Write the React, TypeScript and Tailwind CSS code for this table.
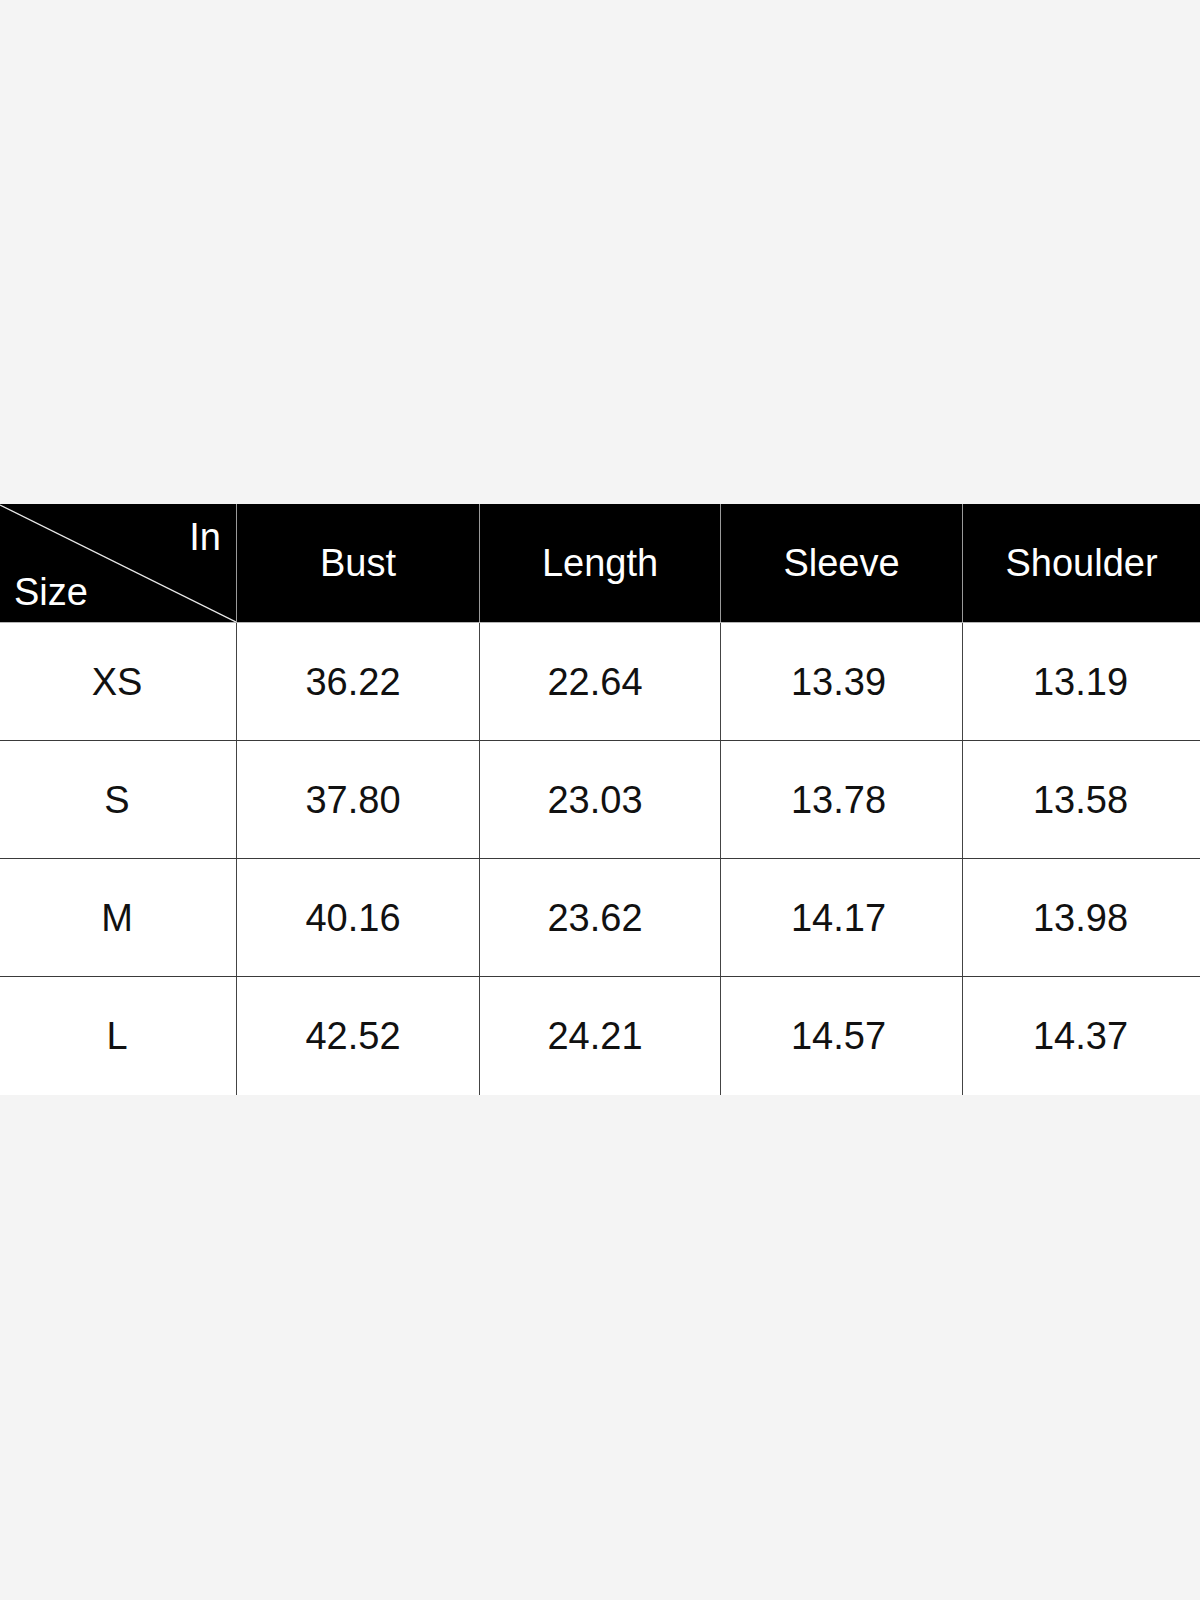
const columns = ["Bust", "Length", "Sleeve", "Shoulder"];

const rows = [
  { size: "XS", values: ["36.22", "22.64", "13.39", "13.19"] },
  { size: "S", values: ["37.80", "23.03", "13.78", "13.58"] },
  { size: "M", values: ["40.16", "23.62", "14.17", "13.98"] },
  { size: "L", values: ["42.52", "24.21", "14.57", "14.37"] },
];

const widths = ["w-[237px]", "w-[243px]", "w-[241px]", "w-[242px]", "flex-1"];
// the numbers sit a little left of centre in the middle columns
const shifts = ["pr-[10px]", "pr-[10px]", "pr-[6px]", "pr-[2px]"];

export default function App() {
  return (
    <div
      className="min-h-[1600px] w-full bg-[#f4f4f4] pt-[504px]"
      style={{ fontFamily: '"Liberation Sans", Arial, sans-serif' }}
    >
      <div className="flex w-full flex-col">
        {/* header */}
        <div className="flex h-[119px] border-b border-[#b5b5b5] bg-black text-white">
          <div className="relative flex w-[237px] flex-col justify-between border-r border-[#9a9a9a] pb-[11px] pl-[14px] pr-[15px] pt-[14px]">
            <svg
              className="absolute inset-0 h-full w-full"
              viewBox="0 0 237 118"
              preserveAspectRatio="none"
            >
              <line x1="0" y1="1" x2="237" y2="118" stroke="#e8e8e8" strokeWidth="1.3" />
            </svg>
            <span className="self-end text-[38px] leading-none">In</span>
            <span className="self-start text-[38px] leading-none">Size</span>
          </div>
          {columns.map((c, i) => (
            <div
              key={c}
              className={`${widths[i + 1]} flex items-center justify-center text-[38px] leading-none ${
                i < columns.length - 1 ? "border-r border-[#9a9a9a]" : ""
              }`}
            >
              {c}
            </div>
          ))}
        </div>

        {/* body */}
        {rows.map((r, ri) => (
          <div
            key={r.size}
            className={`flex h-[118px] bg-white text-[#111] ${
              ri < rows.length - 1 ? "border-b border-[#3a3a3a]" : ""
            }`}
          >
            <div className="flex w-[237px] items-center justify-center border-r border-[#444] pr-[2px] text-[38px] leading-none">
              {r.size}
            </div>
            {r.values.map((v, i) => (
              <div
                key={i}
                className={`${widths[i + 1]} ${shifts[i]} flex items-center justify-center text-[38px] leading-none ${
                  i < r.values.length - 1 ? "border-r border-[#444]" : ""
                }`}
              >
                {v}
              </div>
            ))}
          </div>
        ))}
      </div>
    </div>
  );
}
